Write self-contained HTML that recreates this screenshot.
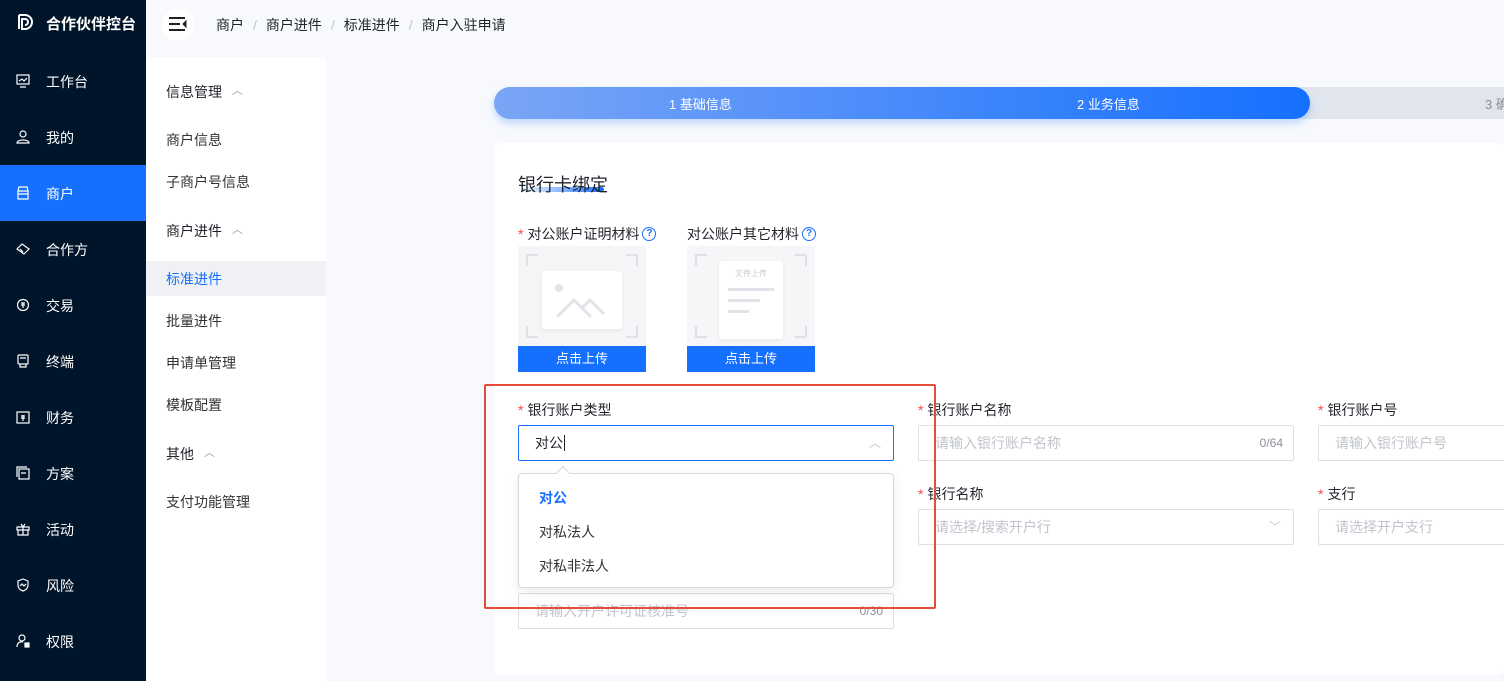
<!DOCTYPE html>
<html><head><meta charset="utf-8"><style>
*{box-sizing:border-box;margin:0;padding:0}
body{width:1504px;height:681px;overflow:hidden;background:#f7f9fd;font-family:"Liberation Sans","Noto Sans CJK SC",sans-serif;font-size:14px;color:#1f2329;position:relative}
.abs{position:absolute}
.side{left:0;top:0;width:146px;height:681px;background:#00152a;color:#fff}
.nav{position:absolute;left:0;width:146px;height:56px;display:flex;align-items:center;padding-left:46px;padding-top:2px;font-size:14px}
.nav svg{position:absolute;left:16px;top:21px}
.nav.act{background:#1570ff}
.sub{left:146px;top:57px;width:180px;height:624px;background:#fff}
.si{position:absolute;left:20px;font-size:14px;color:#333;transform:translateY(-50%)}
.si.g{color:#1f2329}
.si .ch{color:#999;font-size:11px;margin-left:6px;position:relative;top:-3px}
.card{left:494px;top:143px;width:1010px;height:532px;background:#fff;border-radius:6px}
.lbl{position:absolute;font-size:14px;color:#1f2329;transform:translateY(-50%);white-space:nowrap}
.lbl b{color:#f5473b;font-weight:normal;margin-right:4px}
.inp{position:absolute;height:36px;border:1px solid #dcdfe6;border-radius:2px;background:#fff;color:#c0c4cc;font-size:14px;line-height:34px;padding-left:16px}
.cnt{position:absolute;right:10px;top:0;color:#8a8f99;font-size:12px}
.up{position:absolute;width:128px;height:126px;background:#f5f6f8}
.up .btn{position:absolute;left:0;bottom:0;width:128px;height:26px;background:#1570ff;color:#fff;text-align:center;line-height:26px;font-size:13px}
.cor{position:absolute;width:12px;height:12px;border-color:#dfe1e6;border-style:solid;border-width:0}
.q{display:inline-block;width:14px;height:14px;border:1.5px solid #1570ff;border-radius:50%;color:#1570ff;font-size:10px;line-height:11px;text-align:center;font-weight:bold;vertical-align:middle;margin-left:3px;position:relative;top:-1px}
</style></head><body>
<div class="abs side">
  <div class="abs" style="left:17px;top:13px"><svg width="18" height="18" viewBox="0 0 18 18" fill="none" stroke="#fff" stroke-width="2"><path d="M2 2v14M2 2h6a7 7 0 010 14H5V6h3a3 3 0 010 6"/></svg></div>
  <div class="abs" style="left:46px;top:13px;font-size:15px;font-weight:bold">合作伙伴控台</div>
  <div class="nav" style="top:53px"><svg width="14" height="14" viewBox="0 0 14 14" fill="none" stroke="#fff" stroke-width="1.2"><rect x="1" y="1" width="12" height="9"/><path d="M4 13h6M3 7l3-2 2 2 3-3"/></svg>工作台</div>
  <div class="nav" style="top:109px"><svg width="14" height="14" viewBox="0 0 14 14" fill="none" stroke="#fff" stroke-width="1.2"><circle cx="7" cy="4" r="3"/><path d="M1 13c0-4 12-4 12 0z"/></svg>我的</div>
  <div class="nav act" style="top:165px"><svg width="14" height="14" viewBox="0 0 14 14" fill="none" stroke="#fff" stroke-width="1.2"><path d="M2 5l1-4h8l1 4M2 5h10v8H2zM2 8h10"/></svg>商户</div>
  <div class="nav" style="top:221px"><svg width="14" height="14" viewBox="0 0 14 14" fill="none" stroke="#fff" stroke-width="1.2"><path d="M1 7l5-5 7 5-5 5zM4 7l3 3"/></svg>合作方</div>
  <div class="nav" style="top:277px"><svg width="14" height="14" viewBox="0 0 14 14" fill="none" stroke="#fff" stroke-width="1.2"><circle cx="7" cy="7" r="5.5"/><path d="M5 5h4M7 5v5M5 7h4"/></svg>交易</div>
  <div class="nav" style="top:333px"><svg width="14" height="14" viewBox="0 0 14 14" fill="none" stroke="#fff" stroke-width="1.2"><rect x="2" y="1" width="10" height="9" rx="1"/><path d="M4 4h6M4 10v3h6v-3"/></svg>终端</div>
  <div class="nav" style="top:389px"><svg width="14" height="14" viewBox="0 0 14 14" fill="none" stroke="#fff" stroke-width="1.2"><rect x="1" y="2" width="12" height="11"/><path d="M5 6h4M7 5v6M5 8h4"/></svg>财务</div>
  <div class="nav" style="top:445px"><svg width="14" height="14" viewBox="0 0 14 14" fill="none" stroke="#fff" stroke-width="1.2"><rect x="3" y="3" width="10" height="10"/><path d="M1 11V1h10M5 7h5"/></svg>方案</div>
  <div class="nav" style="top:501px"><svg width="14" height="14" viewBox="0 0 14 14" fill="none" stroke="#fff" stroke-width="1.2"><path d="M1 5h12v3H1zM2 8h10v5H2zM7 5v8M5 2l2 3 2-3"/></svg>活动</div>
  <div class="nav" style="top:557px"><svg width="14" height="14" viewBox="0 0 14 14" fill="none" stroke="#fff" stroke-width="1.2"><path d="M7 1l5 2v4c0 3-2 5-5 6-3-1-5-3-5-6V3z"/><path d="M4 8l2-2 2 2 2-2"/></svg>风险</div>
  <div class="nav" style="top:613px"><svg width="14" height="14" viewBox="0 0 14 14" fill="none" stroke="#fff" stroke-width="1.2"><circle cx="6" cy="4" r="3"/><path d="M1 13c0-4 3-6 6-5"/><rect x="9" y="9" width="4" height="4" fill="#fff"/></svg>权限</div>
</div>
<div class="abs" style="left:162px;top:9px;width:32px;height:32px;border-radius:50%;background:#fff"></div>
<svg class="abs" style="left:169px;top:17px" width="18" height="15" viewBox="0 0 18 15" fill="none" stroke="#1f2329" stroke-width="2"><path d="M0 1h16M0 7h11M0 13h16"/><path d="M17 4l-3 3 3 3z" fill="#1f2329" stroke-width="1"/></svg>
<div class="abs" style="left:216px;top:15px;font-size:14px;color:#1f2329;white-space:nowrap">商户<span style="color:#c0c4cc;margin:0 9px">/</span>商户进件<span style="color:#c0c4cc;margin:0 9px">/</span>标准进件<span style="color:#c0c4cc;margin:0 9px">/</span>商户入驻申请</div>
<div class="abs sub">
  <div class="si g" style="top:35px">信息管理 <span class="ch">︿</span></div>
  <div class="si" style="top:83px">商户信息</div>
  <div class="si" style="top:125px">子商户号信息</div>
  <div class="si g" style="top:174px">商户进件 <span class="ch">︿</span></div>
  <div class="abs" style="left:0;top:204px;width:180px;height:35px;background:#f0f1f5"></div>
  <div class="si" style="top:222px;color:#1570ff">标准进件</div>
  <div class="si" style="top:264px">批量进件</div>
  <div class="si" style="top:306px">申请单管理</div>
  <div class="si" style="top:348px">模板配置</div>
  <div class="si g" style="top:397px">其他 <span class="ch">︿</span></div>
  <div class="si" style="top:445px">支付功能管理</div>
</div>
<div class="abs" style="left:494px;top:87px;width:1010px;height:32px;background:#e1e5ee;border-radius:16px 0 0 16px"></div>
<div class="abs" style="left:494px;top:87px;width:816px;height:32px;border-radius:16px;background:linear-gradient(90deg,#7ba5f6,#1570ff);box-shadow:0 4px 8px rgba(21,112,255,.25)"></div>
<div class="abs" style="left:669px;top:94px;color:#fff;font-size:13px">1 基础信息</div>
<div class="abs" style="left:1077px;top:94px;color:#fff;font-size:13px">2 业务信息</div>
<div class="abs" style="left:1485px;top:94px;color:#8a8f99;font-size:13px;white-space:nowrap">3 确</div>
<div class="abs card"></div>
<div class="abs" style="left:518px;top:187px;width:86px;height:5px;background:linear-gradient(90deg,rgba(21,112,255,0),#1570ff);border-radius:3px"></div>
<div class="abs" style="left:518px;top:171px;font-size:18px;color:#1f2329">银行卡绑定</div>
<div class="lbl" style="left:518px;top:234px"><b>*</b>对公账户证明材料<span class="q">?</span></div>
<div class="lbl" style="left:687px;top:234px">对公账户其它材料<span class="q">?</span></div>
<div class="up" style="left:518px;top:246px">
  <div class="cor" style="left:8px;top:8px;border-left-width:2px;border-top-width:2px"></div>
  <div class="cor" style="right:8px;top:8px;border-right-width:2px;border-top-width:2px"></div>
  <div class="cor" style="left:8px;bottom:34px;border-left-width:2px;border-bottom-width:2px"></div>
  <div class="cor" style="right:8px;bottom:34px;border-right-width:2px;border-bottom-width:2px"></div>
  <div class="abs" style="left:24px;top:25px;width:80px;height:58px;background:#fff;border-radius:3px;box-shadow:0 2px 6px rgba(0,0,0,.06)"></div>
  <svg class="abs" style="left:24px;top:25px" width="80" height="58"><circle cx="17" cy="17" r="4" fill="#e2e4ea"/><path d="M15 46l17-17 17 17M40 37l8-8 14 14" fill="none" stroke="#e2e4ea" stroke-width="3"/></svg>
  <div class="btn">点击上传</div>
</div>
<div class="up" style="left:687px;top:246px">
  <div class="cor" style="left:8px;top:8px;border-left-width:2px;border-top-width:2px"></div>
  <div class="cor" style="right:8px;top:8px;border-right-width:2px;border-top-width:2px"></div>
  <div class="cor" style="left:8px;bottom:34px;border-left-width:2px;border-bottom-width:2px"></div>
  <div class="cor" style="right:8px;bottom:34px;border-right-width:2px;border-bottom-width:2px"></div>
  <div class="abs" style="left:32px;top:15px;width:64px;height:78px;background:#fff;border-radius:3px;box-shadow:0 2px 6px rgba(0,0,0,.06)"></div>
  <div class="abs" style="left:48px;top:22px;font-size:8px;color:#c8cad0">文件上传</div>
  <div class="abs" style="left:41px;top:42px;width:46px;height:3px;background:#e2e4ea"></div>
  <div class="abs" style="left:41px;top:53px;width:32px;height:3px;background:#e2e4ea"></div>
  <div class="abs" style="left:41px;top:64px;width:21px;height:3px;background:#e2e4ea"></div>
  <div class="btn">点击上传</div>
</div>
<div class="lbl" style="left:518px;top:410px"><b>*</b>银行账户类型</div>
<div class="inp" style="left:518px;top:425px;width:376px;border-color:#1570ff;color:#1f2329">对公<span style="border-left:1px solid #1f2329;margin-left:1px"></span><span class="abs" style="right:12px;top:0;color:#c0c4cc;font-size:12px">︿</span></div>
<div class="lbl" style="left:918px;top:410px"><b>*</b>银行账户名称</div>
<div class="inp" style="left:918px;top:425px;width:376px">请输入银行账户名称<span class="cnt">0/64</span></div>
<div class="lbl" style="left:1318px;top:410px"><b>*</b>银行账户号</div>
<div class="inp" style="left:1318px;top:425px;width:200px">请输入银行账户号</div>
<div class="lbl" style="left:918px;top:494px"><b>*</b>银行名称</div>
<div class="inp" style="left:918px;top:509px;width:376px">请选择/搜索开户行<span class="abs" style="right:12px;top:0;font-size:12px;color:#c0c4cc">﹀</span></div>
<div class="lbl" style="left:1318px;top:494px"><b>*</b>支行</div>
<div class="inp" style="left:1318px;top:509px;width:200px">请选择开户支行</div>
<div class="inp" style="left:518px;top:593px;width:376px">请输入开户许可证核准号<span class="cnt">0/30</span></div>
<div class="abs" style="left:518px;top:473px;width:376px;height:115px;background:#fff;border:1px solid #d5d8de;border-radius:4px;box-shadow:0 4px 12px rgba(0,0,0,.08)"></div>
<div class="abs" style="left:558px;top:468px;width:10px;height:10px;background:#fff;border-left:1px solid #d5d8de;border-top:1px solid #d5d8de;transform:rotate(45deg)"></div>
<div class="abs" style="left:539px;top:488px;color:#1570ff;font-weight:bold">对公</div>
<div class="abs" style="left:539px;top:522px;color:#333">对私法人</div>
<div class="abs" style="left:539px;top:556px;color:#333">对私非法人</div>
<div class="abs" style="left:484px;top:384px;width:452px;height:225px;border:2px solid #e84a3c;border-radius:2px"></div>
</body></html>
